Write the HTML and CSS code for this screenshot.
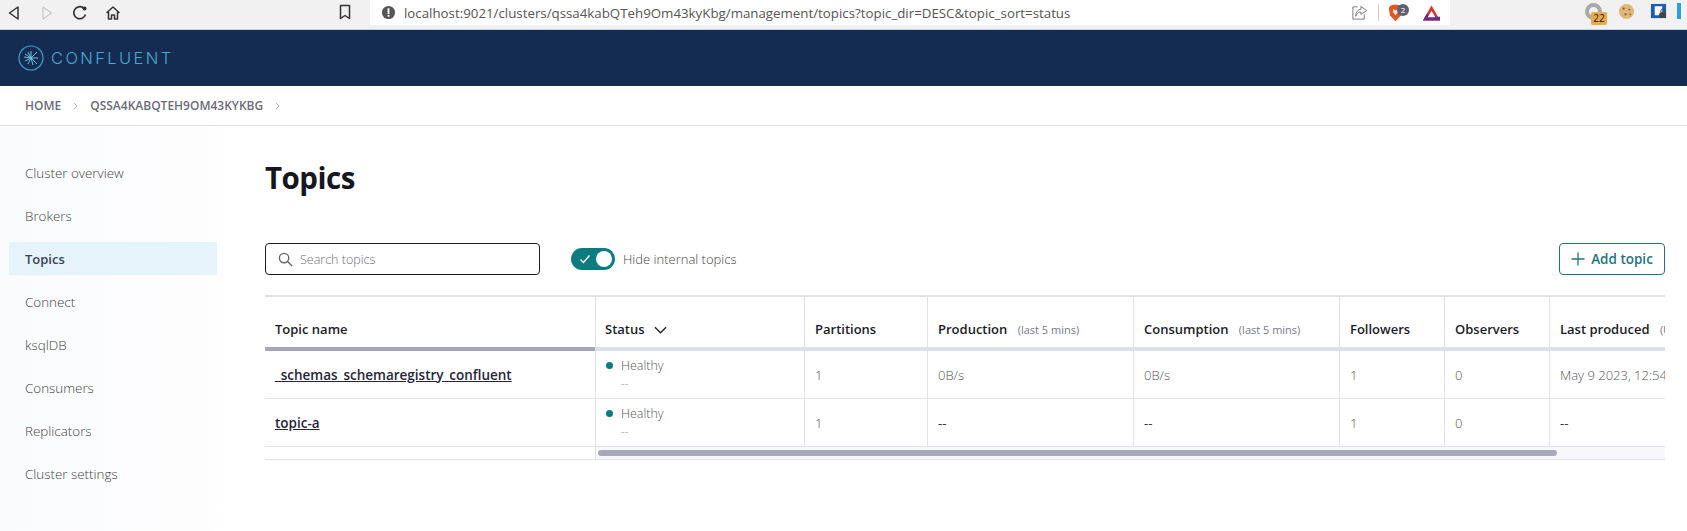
FILE: index.html
```html
<!DOCTYPE html>
<html lang="en">
<head>
    <meta charset="UTF-8">
    <meta name="viewport" content="width=device-width, initial-scale=1.0">
    <title>Topics</title>
    <link rel="stylesheet" href="styles.css">
</head>
<body>
    <div class="browser-bar">
        <div class="nav-icons">
            <svg class="nav-icon" viewBox="0 0 16 16"><path d="M12 2 L3.5 8 L12 14 Z" fill="none" stroke="#333" stroke-width="1.5" stroke-linejoin="round"/></svg>
            <svg class="nav-icon" viewBox="0 0 16 16"><path d="M4 2 L12.5 8 L4 14 Z" fill="none" stroke="#c9c9c9" stroke-width="1.3" stroke-linejoin="round"/></svg>
            <svg class="nav-icon" viewBox="0 0 16 16"><path d="M13.5 9.5 A6 6 0 1 1 11.5 3" fill="none" stroke="#333" stroke-width="1.7"/><circle cx="12.5" cy="3.5" r="2" fill="#333"/></svg>
            <svg class="nav-icon" viewBox="0 0 16 16"><path d="M1.5 8 L8 2 L14.500 8 M3.500 7 V14 H6.500 V10 H9.500 V14 H12.500 V7" fill="none" stroke="#333" stroke-width="1.5" stroke-linejoin="round"/></svg>
        </div>
        <svg class="bookmark" viewBox="0 0 12 16"><path d="M1.500 1.500 H10.500 V14.500 L6 11.500 L1.500 14.500 Z" fill="none" stroke="#333" stroke-width="1.5" stroke-linejoin="round"/></svg>
        <div class="address-bar">
            <svg class="alert" viewBox="0 0 16 16"><circle cx="8" cy="8" r="7" fill="#555"/><rect x="7" y="3.500" width="2" height="6" fill="#fff"/><rect x="7" y="10.500" width="2" height="2" fill="#fff"/></svg>
            <span class="url">localhost:9021/clusters/qssa4kabQTeh9Om43kyKbg/management/topics?topic_dir=DESC&amp;topic_sort=status</span>
            <svg class="share" viewBox="0 0 18 18"><path d="M7 3 H2 V16 H14 V11" fill="none" stroke="#777" stroke-width="1"/><path d="M10.500 2.500 L16.500 7 L10.500 11 V8.500 C8 8.500 6 10 5 13 C5 8.500 7.500 5.500 10.500 5.500 Z" fill="none" stroke="#777" stroke-width="1"/></svg>
            <span class="bar-sep"></span>
            <div class="brave">
                <svg viewBox="0 0 18 22"><path d="M2 3 L6 1 H12 L16 3 L17 6 L15.500 14 L9 21 L2.500 14 L1 6 Z" fill="#e2561f"/><path d="M6 6 L9 8 L12 6 L12 10 L9 14 L6 10 Z" fill="#f9dccb"/></svg>
                <span class="brave-count">2</span>
            </div>
            <svg class="bat" viewBox="0 0 20 18"><path d="M10 1 L19 17 H1 Z" fill="#e0312e"/><path d="M1 17 L5.500 9 L8 13 H19 L19 17 Z" fill="#6b2a86"/><path d="M10 6.500 L14 13.500 H6 Z" fill="#fff"/></svg>
        </div>
        <div class="ext-icons">
            <div class="ext-ring"><span class="ext-count">22</span></div>
            <svg class="cookie" viewBox="0 0 18 18"><circle cx="9" cy="9" r="8" fill="#dfb777"/><circle cx="6" cy="6" r="1.200" fill="#8a5a2b"/><circle cx="12" cy="7" r="1" fill="#8a5a2b"/><circle cx="8" cy="12" r="1.200" fill="#8a5a2b"/><circle cx="13" cy="12" r="0.900" fill="#8a5a2b"/></svg>
            <svg class="keeper" viewBox="0 0 18 18"><rect x="1" y="1" width="16" height="15" fill="#1a5fb4"/><path d="M5 3.500 H13 V9 L9 13 H5 Z" fill="#fff"/><rect x="10" y="10" width="7" height="6" rx="1" fill="#444"/><path d="M11.500 10 V8.500 A2 2 0 0 1 15.500 8.500 V10" fill="none" stroke="#444" stroke-width="1"/></svg>
            <span class="ext-cut"></span>
        </div>
    </div>

    <header class="app-header">
        <svg class="logo" viewBox="0 0 26 26">
            <circle cx="13" cy="13" r="12" fill="none" stroke="#3f9fc4" stroke-width="1.200"/>
            <path d="M13 13 L7 9 M13 13 L6 12 M13 13 L7 16 M13 13 L10 7 M13 13 L10 19 M13 13 L13 6 M13 13 L19 7 M13 13 L20 13 M13 13 L19 19 M13 13 L15 20" stroke="#6cc3df" stroke-width="1"/>
        </svg>
        <span class="logo-text">CONFLUENT</span>
    </header>

    <nav class="breadcrumb">
        <span>HOME</span>
        <svg class="crumb-arrow" viewBox="0 0 6 10"><path d="M1 1 L5 5 L1 9" fill="none" stroke="#999" stroke-width="1"/></svg>
        <span>QSSA4KABQTEH9OM43KYKBG</span>
        <svg class="crumb-arrow" viewBox="0 0 6 10"><path d="M1 1 L5 5 L1 9" fill="none" stroke="#999" stroke-width="1"/></svg>
    </nav>

    <div class="main">
        <aside class="sidebar">
            <a class="side-item">Cluster overview</a>
            <a class="side-item">Brokers</a>
            <a class="side-item active">Topics</a>
            <a class="side-item">Connect</a>
            <a class="side-item">ksqlDB</a>
            <a class="side-item">Consumers</a>
            <a class="side-item">Replicators</a>
            <a class="side-item">Cluster settings</a>
        </aside>

        <section class="content">
            <h1>Topics</h1>

            <div class="controls">
                <label class="search">
                    <svg class="search-icon" viewBox="0 0 16 16"><circle cx="6.500" cy="6.500" r="5" fill="none" stroke="#666" stroke-width="1.500"/><path d="M10.500 10.500 L15 15" stroke="#666" stroke-width="1.500"/></svg>
                    <input type="text" placeholder="Search topics">
                </label>
                <div class="toggle">
                    <svg class="toggle-check" viewBox="0 0 12 10"><path d="M1.500 5.500 L4.500 8.500 L10.500 1.500" fill="none" stroke="#fff" stroke-width="1.300"/></svg>
                    <span class="toggle-knob"></span>
                </div>
                <span class="toggle-label">Hide internal topics</span>
                <button class="add-btn">
                    <svg viewBox="0 0 14 14"><path d="M7 0.500 V13.500 M0.500 7 H13.500" stroke="#1f7483" stroke-width="1.300"/></svg>
                    Add topic
                </button>
            </div>

            <div class="table-wrap">
                <table class="topics">
                    <colgroup>
                        <col class="c-name"><col class="c-status"><col class="c-part"><col class="c-prod"><col class="c-cons"><col class="c-foll"><col class="c-obs"><col class="c-last">
                    </colgroup>
                    <thead>
                        <tr>
                            <th class="th-name">Topic name</th>
                            <th class="th-status">Status
                                <svg class="sort" viewBox="0 0 14 8"><path d="M1 1 L7 7 L13 1" fill="none" stroke="#222" stroke-width="1.400"/></svg>
                            </th>
                            <th>Partitions</th>
                            <th>Production <small>(last 5 mins)</small></th>
                            <th>Consumption <small>(last 5 mins)</small></th>
                            <th>Followers</th>
                            <th>Observers</th>
                            <th>Last produced <small>(UTC)</small></th>
                        </tr>
                    </thead>
                    <tbody>
                        <tr>
                            <td class="td-name"><a>_schemas_schemaregistry_confluent</a></td>
                            <td class="td-status"><div class="healthy">Healthy</div><div class="sub">--</div></td>
                            <td>1</td>
                            <td>0B/s</td>
                            <td>0B/s</td>
                            <td>1</td>
                            <td>0</td>
                            <td class="nowrap">May 9 2023, 12:54:11 PM</td>
                        </tr>
                        <tr>
                            <td class="td-name"><a>topic-a</a></td>
                            <td class="td-status"><div class="healthy">Healthy</div><div class="sub">--</div></td>
                            <td>1</td>
                            <td class="dash">--</td>
                            <td class="dash">--</td>
                            <td>1</td>
                            <td>0</td>
                            <td class="dash">--</td>
                        </tr>
                    </tbody>
                </table>
                <div class="scroll-row">
                    <div class="scroll-track"><div class="scroll-thumb"></div></div>
                </div>
            </div>
        </section>
    </div>
</body>
</html>
```

FILE: styles.css
```css
* {
    box-sizing: border-box;
}
html, body {
    height: 100%;
}
body {
    margin: 0;
    font-family: "Open Sans", Arial, sans-serif;
    color: #333;
    background: #fff;
    overflow: hidden;
}

/* browser chrome */
.browser-bar {
    display: flex;
    align-items: flex-start;
    height: 30px;
    background: #f1f1f1;
    border-bottom: 1px solid #c8d2de;
}
.nav-icons {
    display: flex;
    align-items: center;
    gap: 17px;
    height: 25px;
    padding-left: 6px;
}
.nav-icon {
    width: 16px;
    height: 16px;
}
.bookmark {
    width: 12px;
    height: 16px;
    margin: 4px 0 0 218px;
}
.address-bar {
    display: flex;
    align-items: center;
    width: 1080px;
    height: 25px;
    margin-left: 19px;
    padding-left: 11px;
    background: #fff;
}
.alert {
    width: 15px;
    height: 15px;
}
.url {
    margin-left: 8px;
    width: 925px;
    font-size: 13.300px;
    color: #555;
    white-space: nowrap;
}
.share {
    width: 17px;
    height: 17px;
    margin-left: 22px;
}
.bar-sep {
    width: 1px;
    height: 17px;
    margin-left: 10px;
    background: #ccc;
}
.brave {
    position: relative;
    width: 15px;
    height: 20px;
    margin-left: 9px;
}
.brave svg {
    width: 15px;
    height: 20px;
    display: block;
}
.brave-count {
    position: absolute;
    top: 1px;
    left: 9px;
    width: 12px;
    height: 12px;
    border-radius: 50%;
    background: #5b6072;
    color: #fff;
    font-size: 8px;
    line-height: 12px;
    text-align: center;
}
.bat {
    width: 19px;
    height: 18px;
    margin-left: 19px;
}
.ext-icons {
    display: flex;
    align-items: flex-start;
    height: 25px;
    margin-left: 135px;
}
.ext-ring {
    position: relative;
    width: 17px;
    height: 17px;
    margin-top: 3px;
    border: 4px solid #a9a9a9;
    border-radius: 50%;
}
.ext-count {
    position: absolute;
    top: 5px;
    left: 2px;
    width: 16px;
    height: 13px;
    background: #e8a94c;
    border-radius: 2px;
    color: #222;
    font-size: 10px;
    line-height: 13px;
    text-align: center;
}
.cookie {
    width: 17px;
    height: 17px;
    margin: 3px 0 0 16px;
}
.keeper {
    width: 17px;
    height: 17px;
    margin: 3px 0 0 15px;
}
.ext-cut {
    width: 4px;
    height: 16px;
    margin: 3px 0 0 10px;
    background: #2b9fe0;
}

/* app header */
.app-header {
    display: flex;
    align-items: center;
    height: 56px;
    padding-left: 18px;
    background: #152c52;
}
.logo {
    width: 26px;
    height: 26px;
}
.logo-text {
    margin-left: 7px;
    font-family: "Inter", sans-serif;
    font-size: 16.500px;
    font-weight: 300;
    letter-spacing: 2.400px;
    color: #48a9cc;
}

.breadcrumb {
    display: flex;
    align-items: center;
    height: 40px;
    padding-left: 25px;
    border-bottom: 1px solid #dedede;
    font-size: 12px;
    font-weight: 600;
    color: #6b6b78;
}
.crumb-arrow {
    width: 5px;
    height: 8px;
    margin: 0 12px;
}

.main {
    display: flex;
    height: 405px;
}

/* sidebar */
.sidebar {
    display: flex;
    flex-direction: column;
    gap: 10px;
    width: 232px;
    padding: 30px 15px 0 9px;
    background: linear-gradient(90deg, #fafbfd, #fdfdfe 85%, #fff);
}
.side-item {
    display: flex;
    align-items: center;
    height: 33px;
    padding-left: 16px;
    font-size: 13.400px;
    font-weight: 300;
    color: #444;
}
.side-item.active {
    background: #e5f3fb;
    font-weight: 600;
    font-size: 13px;
    color: #3a4256;
}

/* content */
.content {
    flex: 1;
    min-width: 0;
    padding: 0 22px 0 33px;
}
h1 {
    margin: 32px 0 0;
    font-size: 29.500px;
    line-height: 40px;
    font-weight: 700;
    letter-spacing: -0.500px;
    color: #16161f;
}
.controls {
    display: flex;
    align-items: center;
    height: 32px;
    margin-top: 45px;
}
.search {
    display: flex;
    align-items: center;
    width: 275px;
    height: 32px;
    padding-left: 12px;
    border: 1px solid #1c1c28;
    border-radius: 4px;
}
.search-icon {
    width: 15px;
    height: 15px;
}
.search input {
    flex: 1;
    min-width: 0;
    margin-left: 7px;
    padding: 1px 0 0;
    border: none;
    outline: none;
    font-family: inherit;
    font-size: 12.500px;
    font-weight: 300;
}
.search input::placeholder {
    color: #6d6d78;
    opacity: 1;
}
.toggle {
    position: relative;
    width: 44px;
    height: 22px;
    margin-left: 31px;
    background: #0c7c80;
    border-radius: 11px;
}
.toggle-check {
    position: absolute;
    top: 6px;
    left: 8px;
    width: 12px;
    height: 10px;
}
.toggle-knob {
    position: absolute;
    top: 3px;
    right: 3px;
    width: 16px;
    height: 16px;
    background: #fff;
    border-radius: 50%;
}
.toggle-label {
    margin-left: 8px;
    font-size: 13px;
    font-weight: 300;
    color: #444;
}
.add-btn {
    display: flex;
    align-items: center;
    justify-content: center;
    gap: 6px;
    width: 106px;
    height: 32px;
    margin-left: auto;
    padding: 0;
    background: #fff;
    border: 1px solid #1f7483;
    border-radius: 4px;
    font-family: inherit;
    font-size: 13.500px;
    font-weight: 600;
    color: #1f7483;
}
.add-btn svg {
    width: 14px;
    height: 14px;
}

/* table */
.table-wrap {
    margin-top: 20px;
    overflow: hidden;
    border-top: 2px solid #e2e2e6;
}
.topics {
    width: 1600px;
    table-layout: fixed;
    border-collapse: separate;
    border-spacing: 0;
}
.c-name { width: 330px; }
.c-status { width: 209px; }
.c-part { width: 123px; }
.c-prod { width: 206px; }
.c-cons { width: 206px; }
.c-foll { width: 105px; }
.c-obs { width: 105px; }
.c-last { width: 316px; }
th {
    height: 54px;
    padding: 14px 0 0 10px;
    border-left: 1px solid #e2e2e8;
    border-bottom: 4px solid #dfe0e6;
    text-align: left;
    font-size: 13px;
    font-weight: 600;
    color: #1c1c28;
    white-space: nowrap;
}
th small {
    margin-left: 7px;
    font-size: 11px;
    font-weight: 400;
    color: #77778a;
}
th.th-name {
    border-left: none;
    border-bottom-color: #a6a6b6;
}
th.th-status {
    padding-left: 9px;
}
.sort {
    width: 13px;
    height: 8px;
    margin-left: 6px;
}
td {
    height: 48px;
    padding: 0 0 0 10px;
    border-left: 1px solid #e2e2e8;
    border-bottom: 1px solid #e2e2e8;
    font-size: 13px;
    font-weight: 300;
    color: #555;
    white-space: nowrap;
}
td.td-name {
    border-left: none;
}
.td-name a {
    font-size: 13.500px;
    font-weight: 600;
    color: #26263a;
    text-decoration: underline;
}
td.dash {
    font-weight: 400;
    color: #333;
}
.healthy {
    display: flex;
    align-items: center;
    line-height: 18px;
    font-size: 12.500px;
}
.healthy::before {
    content: "";
    width: 7px;
    height: 7px;
    margin-right: 8px;
    border-radius: 50%;
    background: #0c7c80;
}
.sub {
    padding-left: 15px;
    line-height: 18px;
    font-size: 12px;
    color: #999;
}
.scroll-row {
    height: 13px;
    padding-left: 330px;
    border-bottom: 1px solid #e2e2e8;
}
.scroll-track {
    height: 12px;
    padding: 3px 0 0 2px;
    border-left: 1px solid #e2e2e8;
    background: #f8f8fb;
}
.scroll-thumb {
    width: 959px;
    height: 6px;
    background: #a8a8b8;
    border-radius: 3px;
}
```
